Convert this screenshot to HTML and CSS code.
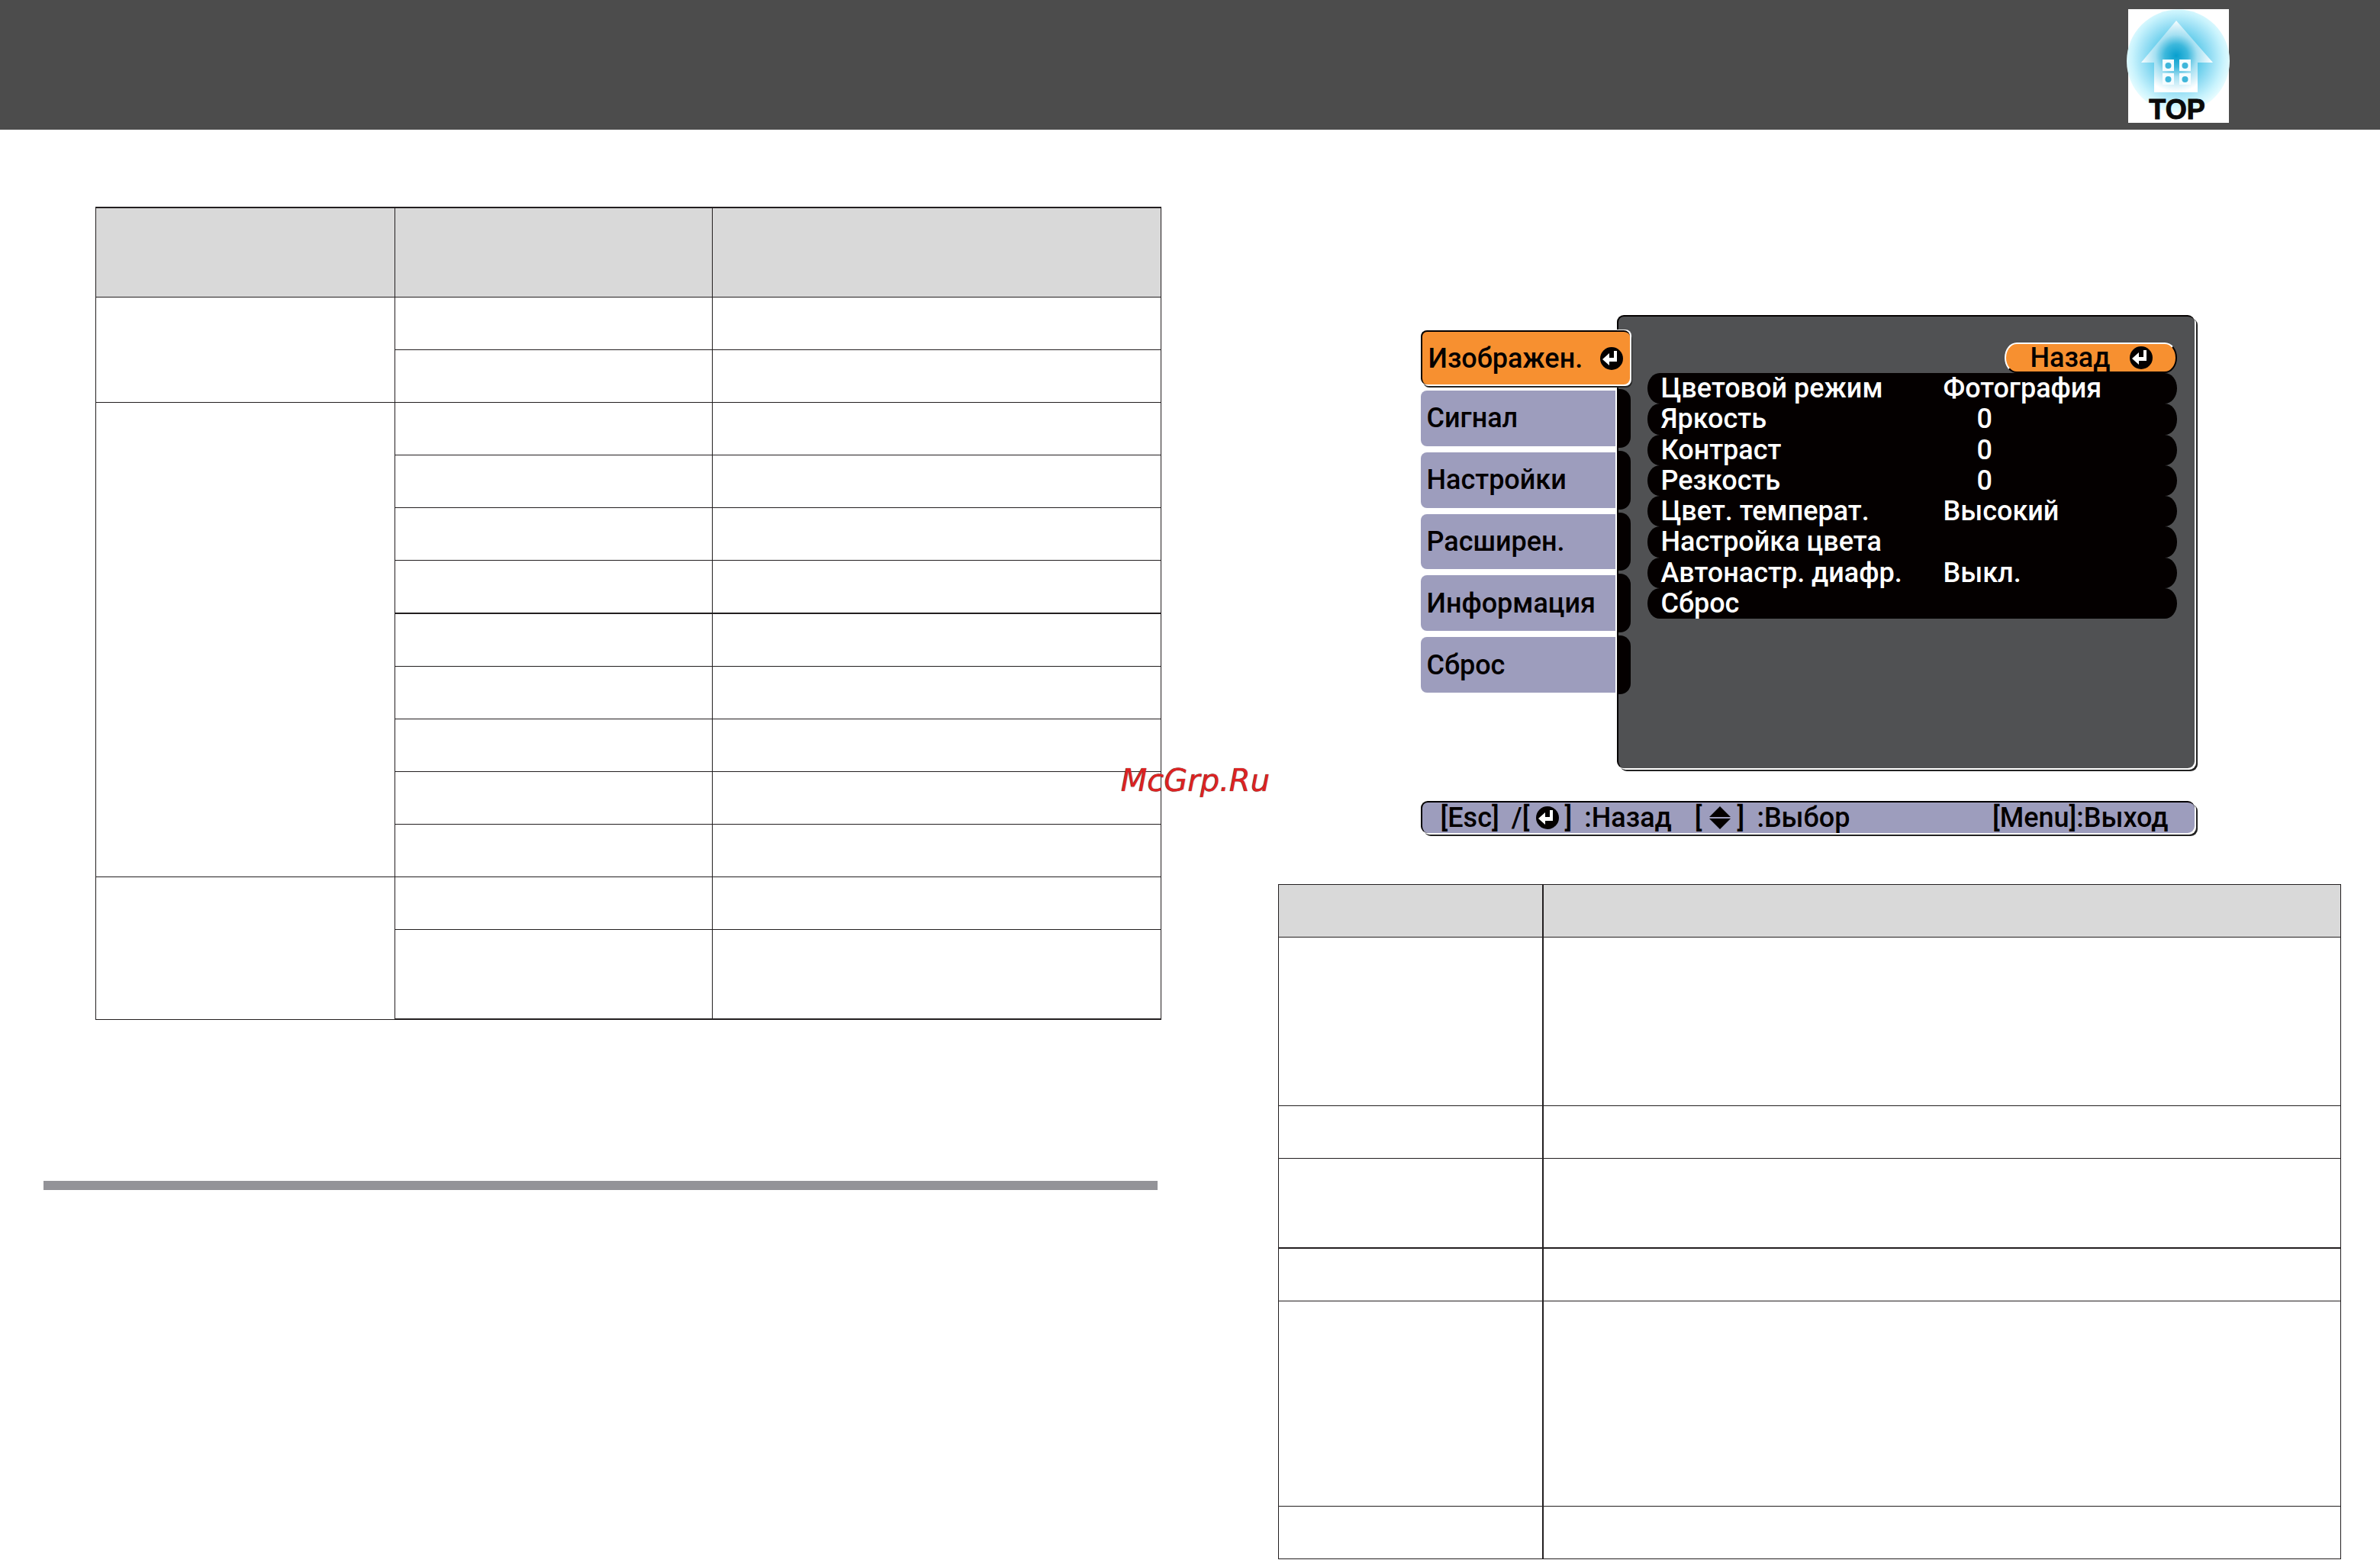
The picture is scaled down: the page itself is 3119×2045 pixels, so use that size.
FILE: index.html
```html
<!DOCTYPE html>
<html lang="ru">
<head>
    <meta charset="UTF-8">
    <meta name="viewport" content="width=device-width, initial-scale=1.0">
    <title>Меню Изображен.</title>
    <link rel="stylesheet" href="styles.css">
</head>
<body>
    <svg class="sprite" aria-hidden="true">
        <symbol id="enter" viewBox="0 0 30 30">
            <circle cx="15" cy="15" r="15" fill="#040000"/>
            <path d="M18 5h4v14H12v5L3 16l9-8v6h6z" fill="#fff"/>
        </symbol>
        <symbol id="updown" viewBox="0 0 30 30">
            <path d="M15 0l14 14H1zM15 30L1 16h28z" fill="#040000"/>
        </symbol>
    </svg>

    <header class="topbar">
        <a class="top-link" href="#">
            <svg class="top-logo" viewBox="27 12 136 149">
                <defs>
                    <radialGradient id="glow" gradientUnits="userSpaceOnUse" cx="94" cy="76" r="70">
                        <stop offset="0" stop-color="#1fb0d8"/>
                        <stop offset="0.4" stop-color="#5fcbea"/>
                        <stop offset="0.65" stop-color="#9be0f5"/>
                        <stop offset="0.85" stop-color="#c8f3fd"/>
                        <stop offset="1" stop-color="#e6fcff"/>
                    </radialGradient>
                    <radialGradient id="house" gradientUnits="userSpaceOnUse" cx="92" cy="73" r="50">
                        <stop offset="0" stop-color="#079fce"/>
                        <stop offset="0.3" stop-color="#3db8dc"/>
                        <stop offset="0.55" stop-color="#a5e0f2"/>
                        <stop offset="0.95" stop-color="#fff"/>
                    </radialGradient>
                </defs>
                <rect x="29" y="12" width="132" height="149" fill="#fff"/>
                <circle cx="94.500" cy="80" r="67.500" fill="url(#glow)"/>
                <path d="M92 27l48 55h-20v39H63V82H46z" fill="url(#house)"/>
                <path d="M74 78h15v15H74zM96 78h15v15H96zM74 96h15v15H74zM96 96h15v15H96z" fill="#f4fcff"/>
                <g fill="#3fb6da">
                    <circle cx="81.500" cy="86" r="4"/>
                    <circle cx="103.500" cy="86" r="4"/>
                    <circle cx="81.500" cy="104" r="4"/>
                    <circle cx="103.500" cy="104" r="4"/>
                </g>
                <text class="top-text" x="93" y="156" text-anchor="middle">TOP</text>
            </svg>
        </a>
    </header>

    <main class="page">
        <section class="col-left">
            <table class="grid modes">
                <colgroup>
                    <col class="m1">
                    <col class="m2">
                    <col class="m3">
                </colgroup>
                <thead>
                    <tr class="h2"><th></th><th></th><th></th></tr>
                </thead>
                <tbody>
                    <tr><td rowspan="2"></td><td></td><td></td></tr>
                    <tr><td></td><td></td></tr>
                    <tr><td rowspan="9"></td><td></td><td></td></tr>
                    <tr><td></td><td></td></tr>
                    <tr><td></td><td></td></tr>
                    <tr class="thick"><td></td><td></td></tr>
                    <tr><td></td><td></td></tr>
                    <tr><td></td><td></td></tr>
                    <tr><td></td><td></td></tr>
                    <tr><td></td><td></td></tr>
                    <tr><td></td><td></td></tr>
                    <tr><td rowspan="2"></td><td></td><td></td></tr>
                    <tr class="h2 thick"><td></td><td></td></tr>
                </tbody>
            </table>
            <hr class="rule">
            <div class="watermark">McGrp.Ru</div>
        </section>

        <section class="col-right">
            <div class="osd">
                <div class="osd-body">
                    <nav class="tabs">
                        <button class="tab active">Изображен.<svg class="icon"><use href="#enter"/></svg></button>
                        <button class="tab">Сигнал</button>
                        <button class="tab">Настройки</button>
                        <button class="tab">Расширен.</button>
                        <button class="tab">Информация</button>
                        <button class="tab">Сброс</button>
                    </nav>
                    <div class="panel">
                        <button class="back">Назад<svg class="icon"><use href="#enter"/></svg></button>
                        <ul class="items">
                            <li><span>Цветовой режим</span><span>Фотография</span></li>
                            <li><span>Яркость</span><span class="num">0</span></li>
                            <li><span>Контраст</span><span class="num">0</span></li>
                            <li><span>Резкость</span><span class="num">0</span></li>
                            <li><span>Цвет. температ.</span><span>Высокий</span></li>
                            <li><span>Настройка цвета</span></li>
                            <li><span>Автонастр. диафр.</span><span>Выкл.</span></li>
                            <li><span>Сброс</span></li>
                        </ul>
                    </div>
                </div>
                <div class="hints">
                    <span class="hint">[Esc]</span>
                    <span class="hint">/[<svg class="icon"><use href="#enter"/></svg>]</span>
                    <span class="hint">:Назад</span>
                    <span class="hint select">[<svg class="icon"><use href="#updown"/></svg>]</span>
                    <span class="hint">:Выбор</span>
                    <span class="hint exit">[Menu]:Выход</span>
                </div>
            </div>

            <table class="grid submenu">
                <colgroup>
                    <col class="s1">
                    <col class="s2">
                </colgroup>
                <thead>
                    <tr><th></th><th></th></tr>
                </thead>
                <tbody>
                    <tr class="h4"><td></td><td></td></tr>
                    <tr><td></td><td></td></tr>
                    <tr class="h2 thick"><td></td><td></td></tr>
                    <tr><td></td><td></td></tr>
                    <tr class="h5"><td></td><td></td></tr>
                    <tr><td></td><td></td></tr>
                </tbody>
            </table>
        </section>
    </main>
</body>
</html>
```
FILE: styles.css
```css
* {
    box-sizing: border-box;
}
body {
    margin: 0;
    background-color: #fff;
    color: #040000;
    font-family: Roboto, "Liberation Sans", sans-serif;
}
button {
    font: inherit;
    color: inherit;
    border: none;
    padding: 0;
    cursor: pointer;
}
.sprite {
    display: none;
}
.icon {
    width: 30px;
    height: 30px;
    flex: none;
}

/* header */
.topbar {
    display: flex;
    justify-content: flex-end;
    height: 170px;
    padding: 12px 196px 0 0;
    background-color: #4c4c4c;
}
.top-link,
.top-logo {
    display: block;
    width: 136px;
    height: 149px;
    overflow: visible;
}
.top-text {
    font: bold 36px "Liberation Sans", Arial, sans-serif;
    fill: #0a0a0a;
    stroke: #0a0a0a;
    stroke-width: 1px;
}

.page {
    display: grid;
    grid-template-columns: 1465fr 1393fr;
    column-gap: 153px;
    padding: 0 51px 0 57px;
}
.col-left {
    position: relative;
    padding-top: 101px;
}
.col-right {
    padding-top: 243px;
}

/* tables */
.grid {
    table-layout: fixed;
    border-collapse: separate;
    border-spacing: 0;
    border-left: 1px solid #231f20;
    border-top: 1px solid #231f20;
}
.grid th,
.grid td {
    height: 69px;
    padding: 0;
    border-right: 1px solid #231f20;
    border-bottom: 1px solid #231f20;
}
.grid th {
    background-color: #d9d9d9;
}
.grid .h2 > th {
    height: 117px;
}
.grid .h4 > td {
    height: 221px;
}
.grid .h5 > td {
    height: 269px;
}
.grid .thick > td {
    height: 70px;
    border-bottom-width: 2px;
}
.grid .h2.thick > td {
    height: 118px;
}
.modes {
    width: calc(100% - 68px);
    margin-left: 68px;
    border-top-width: 2px;
}
.m1 { width: 28.1%; }
.m2 { width: 29.8%; }
.m3 { width: 42.1%; }
.submenu {
    width: 100%;
    margin-top: 67px;
}
.s1 { width: 24.9%; }
.s2 { width: 75.1%; }
.submenu th:first-child,
.submenu td:first-child {
    border-right-width: 2px;
}
.rule {
    height: 12px;
    margin: 211px 5px 0 0;
    border: none;
    background-color: #939398;
}
.watermark {
    position: absolute;
    right: -142px;
    top: 830px;
    font: italic 40px/46px "DejaVu Sans", sans-serif;
    color: #dd2222;
    text-shadow: 0 0 1px #222;
}

/* projector menu */
.osd {
    max-width: 1020px;
    margin: 0 auto;
    padding-right: 6px;
    font-size: 36px;
    font-weight: 500;
    line-height: 40px;
}
.osd-body {
    display: grid;
    grid-template-columns: 257px 1fr;
    align-items: start;
}
.tabs {
    display: flex;
    flex-direction: column;
    gap: 8px;
    height: 495px;
    padding-top: 20px;
    z-index: 1;
}
.tab {
    position: relative;
    flex: 1;
    width: 255px;
    padding-left: 8px;
    text-align: left;
    background-color: #9d9dbd;
    border-radius: 8px 0 0 8px;
}
.tab::after {
    content: "";
    position: absolute;
    left: 257px;
    top: -2px;
    bottom: -2px;
    width: 18px;
    background-color: #040000;
    border-radius: 0 14px 14px 0;
}
.tab.active {
    display: flex;
    align-items: center;
    justify-content: space-between;
    flex: none;
    width: 274px;
    height: 71px;
    padding-right: 9px;
    background-color: #f79030;
    border-top: 2px solid #040000;
    border-left: 2px solid #040000;
    border-radius: 8px;
    box-shadow: 2px -1px 0 #fff, 2px 2px 0 #fff, 3px 4px 0 #222;
}
.tab.active::after {
    display: none;
}
.panel {
    display: flex;
    flex-direction: column;
    height: 594px;
    padding: 34px 23px 0 38px;
    background-color: #505153;
    border-top: 2px solid #040000;
    border-left: 2px solid #040000;
    border-radius: 9px;
    box-shadow: 2px 2px 0 #fff, 4px 4px 0 #222;
}
.back {
    display: flex;
    align-items: center;
    justify-content: space-between;
    align-self: flex-end;
    width: 226px;
    height: 40px;
    padding: 0 30px 0 32px;
    background-color: #f79030;
    border: 2px solid #fff;
    border-right-color: #040000;
    border-bottom-color: #040000;
    border-radius: 16px / 20px;
}
.items {
    display: grid;
    grid-auto-rows: 1fr;
    height: 322px;
    margin: 0;
    padding: 0;
    list-style: none;
    color: #fff;
}
.items li {
    display: grid;
    grid-template-columns: 370px 1fr;
    padding-left: 18px;
    background-color: #040000;
    border-radius: 16px / 20px;
}
.items .num {
    padding-left: 44px;
}
.hints {
    display: flex;
    align-items: center;
    height: 42px;
    margin-top: 43px;
    padding: 0 34px 0 24px;
    background-color: #9d9dbd;
    border-top: 2px solid #040000;
    border-left: 2px solid #040000;
    border-radius: 9px;
    box-shadow: 2px 2px 0 #fff, 4px 4px 0 #222;
}
.hint {
    display: flex;
    align-items: center;
    gap: 8px;
    margin-right: 16px;
}
.hint.select {
    margin-left: 14px;
}
.hint.exit {
    margin: 0 0 0 auto;
}
```
